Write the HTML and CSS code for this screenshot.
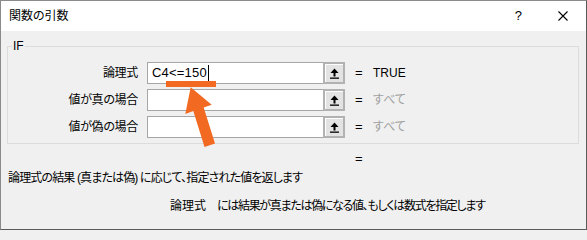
FILE: index.html
```html
<!DOCTYPE html>
<html lang="ja">
<head>
<meta charset="utf-8">
<title>関数の引数</title>
<link rel="stylesheet" href="styles.css">
</head>
<body>
<div class="dialog">
  <div class="titlebar">
    <span class="title">関数の引数</span>
    <span class="help">?</span>
    <svg class="close" width="10" height="10" viewBox="0 0 10 10"><path d="M0.5 0.5 L9.5 9.5 M9.5 0.5 L0.5 9.5" stroke="#000" stroke-width="1.1" fill="none"/></svg>
  </div>
  <div class="content">
    <fieldset class="group">
      <legend class="group-label">IF</legend>
      <div class="arg-row">
        <span class="arg-label">論理式</span>
        <div class="field">
          <div class="edit"><span class="edit-text">C4&lt;=150</span><span class="caret"></span></div>
          <div class="ref-btn"><svg width="9" height="11" viewBox="0 0 9 11"><path d="M4.5 0.5 L8.5 5 L0.5 5 Z" fill="#000"/><rect x="3.5" y="5" width="2" height="3.5" fill="#000"/><rect x="0" y="9.5" width="9" height="1.3" fill="#000"/></svg></div>
        </div>
        <span class="eq">=</span>
        <span class="value">TRUE</span>
      </div>
      <div class="arg-row">
        <span class="arg-label">値が真の場合</span>
        <div class="field">
          <div class="edit"></div>
          <div class="ref-btn"><svg width="9" height="11" viewBox="0 0 9 11"><path d="M4.5 0.5 L8.5 5 L0.5 5 Z" fill="#000"/><rect x="3.5" y="5" width="2" height="3.5" fill="#000"/><rect x="0" y="9.5" width="9" height="1.3" fill="#000"/></svg></div>
        </div>
        <span class="eq">=</span>
        <span class="value muted">すべて</span>
      </div>
      <div class="arg-row">
        <span class="arg-label">値が偽の場合</span>
        <div class="field">
          <div class="edit"></div>
          <div class="ref-btn"><svg width="9" height="11" viewBox="0 0 9 11"><path d="M4.5 0.5 L8.5 5 L0.5 5 Z" fill="#000"/><rect x="3.5" y="5" width="2" height="3.5" fill="#000"/><rect x="0" y="9.5" width="9" height="1.3" fill="#000"/></svg></div>
        </div>
        <span class="eq">=</span>
        <span class="value muted">すべて</span>
      </div>
    </fieldset>
    <div class="result"><span class="eq">=</span></div>
    <p class="desc">論理式の結果 (真または偽) に応じて、指定された値を返します</p>
    <p class="arg-desc"><span class="arg-name">論理式</span><span class="arg-text">には結果が真または偽になる値、もしくは数式を指定します</span></p>
  </div>
  <svg class="annotation" width="587" height="230" viewBox="0 0 587 230">
    <rect x="166" y="81" width="50" height="6" fill="#f26a21"/>
    <polygon points="190.7,87.3 211.7,104.7 203.7,107.6 215,143.5 204.5,147 193.3,111 185.3,114" fill="#f26a21"/>
  </svg>
</div>
</body>
</html>
```

FILE: styles.css
```css
html, body {
  margin: 0;
  padding: 0;
  background: #f0f0f0;
}

.dialog {
  position: relative;
  box-sizing: border-box;
  width: 587px;
  height: 230px;
  background: #f0f0f0;
  border: 1px solid #8a8a8a;
  border-right-color: #5a5a5a;
  border-bottom-color: #5a5a5a;
  font-family: "Liberation Sans", "Noto Sans CJK JP", sans-serif;
  font-size: 12px;
  color: #000;
  font-feature-settings: "palt";
  overflow: hidden;
}

.titlebar {
  height: 30px;
  background: #fff;
  display: flex;
  align-items: center;
  padding: 0 18px 0 8px;
}

.title {
  flex: 1;
  line-height: 14px;
}

.help {
  font-size: 13px;
  line-height: 14px;
  margin-right: 36px;
}

.close {
  display: block;
}

.content {
  padding: 0;
}

.group {
  margin: 8px 7px 0 6px;
  padding: 9px 0 5px 0;
  border: 1px solid #dcdcdc;
  display: flex;
  flex-direction: column;
  gap: 5px;
  min-width: 0;
}

.group-label {
  margin-left: 4px;
  padding: 0 1px;
  line-height: 14px;
  font-size: 12px;
}

.arg-row {
  display: flex;
  align-items: center;
  height: 22px;
}

.arg-label {
  width: 130px;
  text-align: right;
  margin-right: 9px;
  line-height: 14px;
  letter-spacing: -0.3px;
}

.field {
  width: 198px;
  height: 22px;
  display: flex;
  box-sizing: border-box;
}

.edit {
  flex: 1;
  box-sizing: border-box;
  height: 22px;
  background: #fff;
  border: 1px solid #a6a6a6;
  border-right: none;
  display: flex;
  align-items: center;
  padding-left: 4px;
}

.edit-text {
  font-size: 13px;
  line-height: 16px;
  letter-spacing: 0.2px;
  color: #000;
}

.caret {
  width: 1px;
  height: 16px;
  background: #000;
  margin-left: 1px;
}

.ref-btn {
  width: 22px;
  height: 22px;
  box-sizing: border-box;
  border: 2px solid #b2b2b2;
  background: #e3e3e3;
  box-shadow: inset 1px 1px 0 #fdfdfd;
  display: flex;
  align-items: center;
  justify-content: center;
}

.ref-btn svg {
  display: block;
}

.eq {
  width: 8px;
  margin-left: 10px;
  line-height: 14px;
  font-size: 13px;
}

.value {
  margin-left: 10px;
  line-height: 14px;
}

.muted {
  color: #a0a0a0;
}

.result {
  margin: 8px 0 0 354px;
  height: 14px;
  display: flex;
}

.result .eq {
  margin-left: 0;
}

.desc {
  margin: 5px 0 0 7px;
  line-height: 14px;
  letter-spacing: -0.85px;
  white-space: nowrap;
}

.arg-desc {
  margin: 14px 0 0 169px;
  line-height: 14px;
  white-space: nowrap;
}

.arg-name {
  margin-right: 11px;
}

.arg-text {
  letter-spacing: -1.3px;
}

.annotation {
  position: absolute;
  left: -1px;
  top: -1px;
  pointer-events: none;
}
```
